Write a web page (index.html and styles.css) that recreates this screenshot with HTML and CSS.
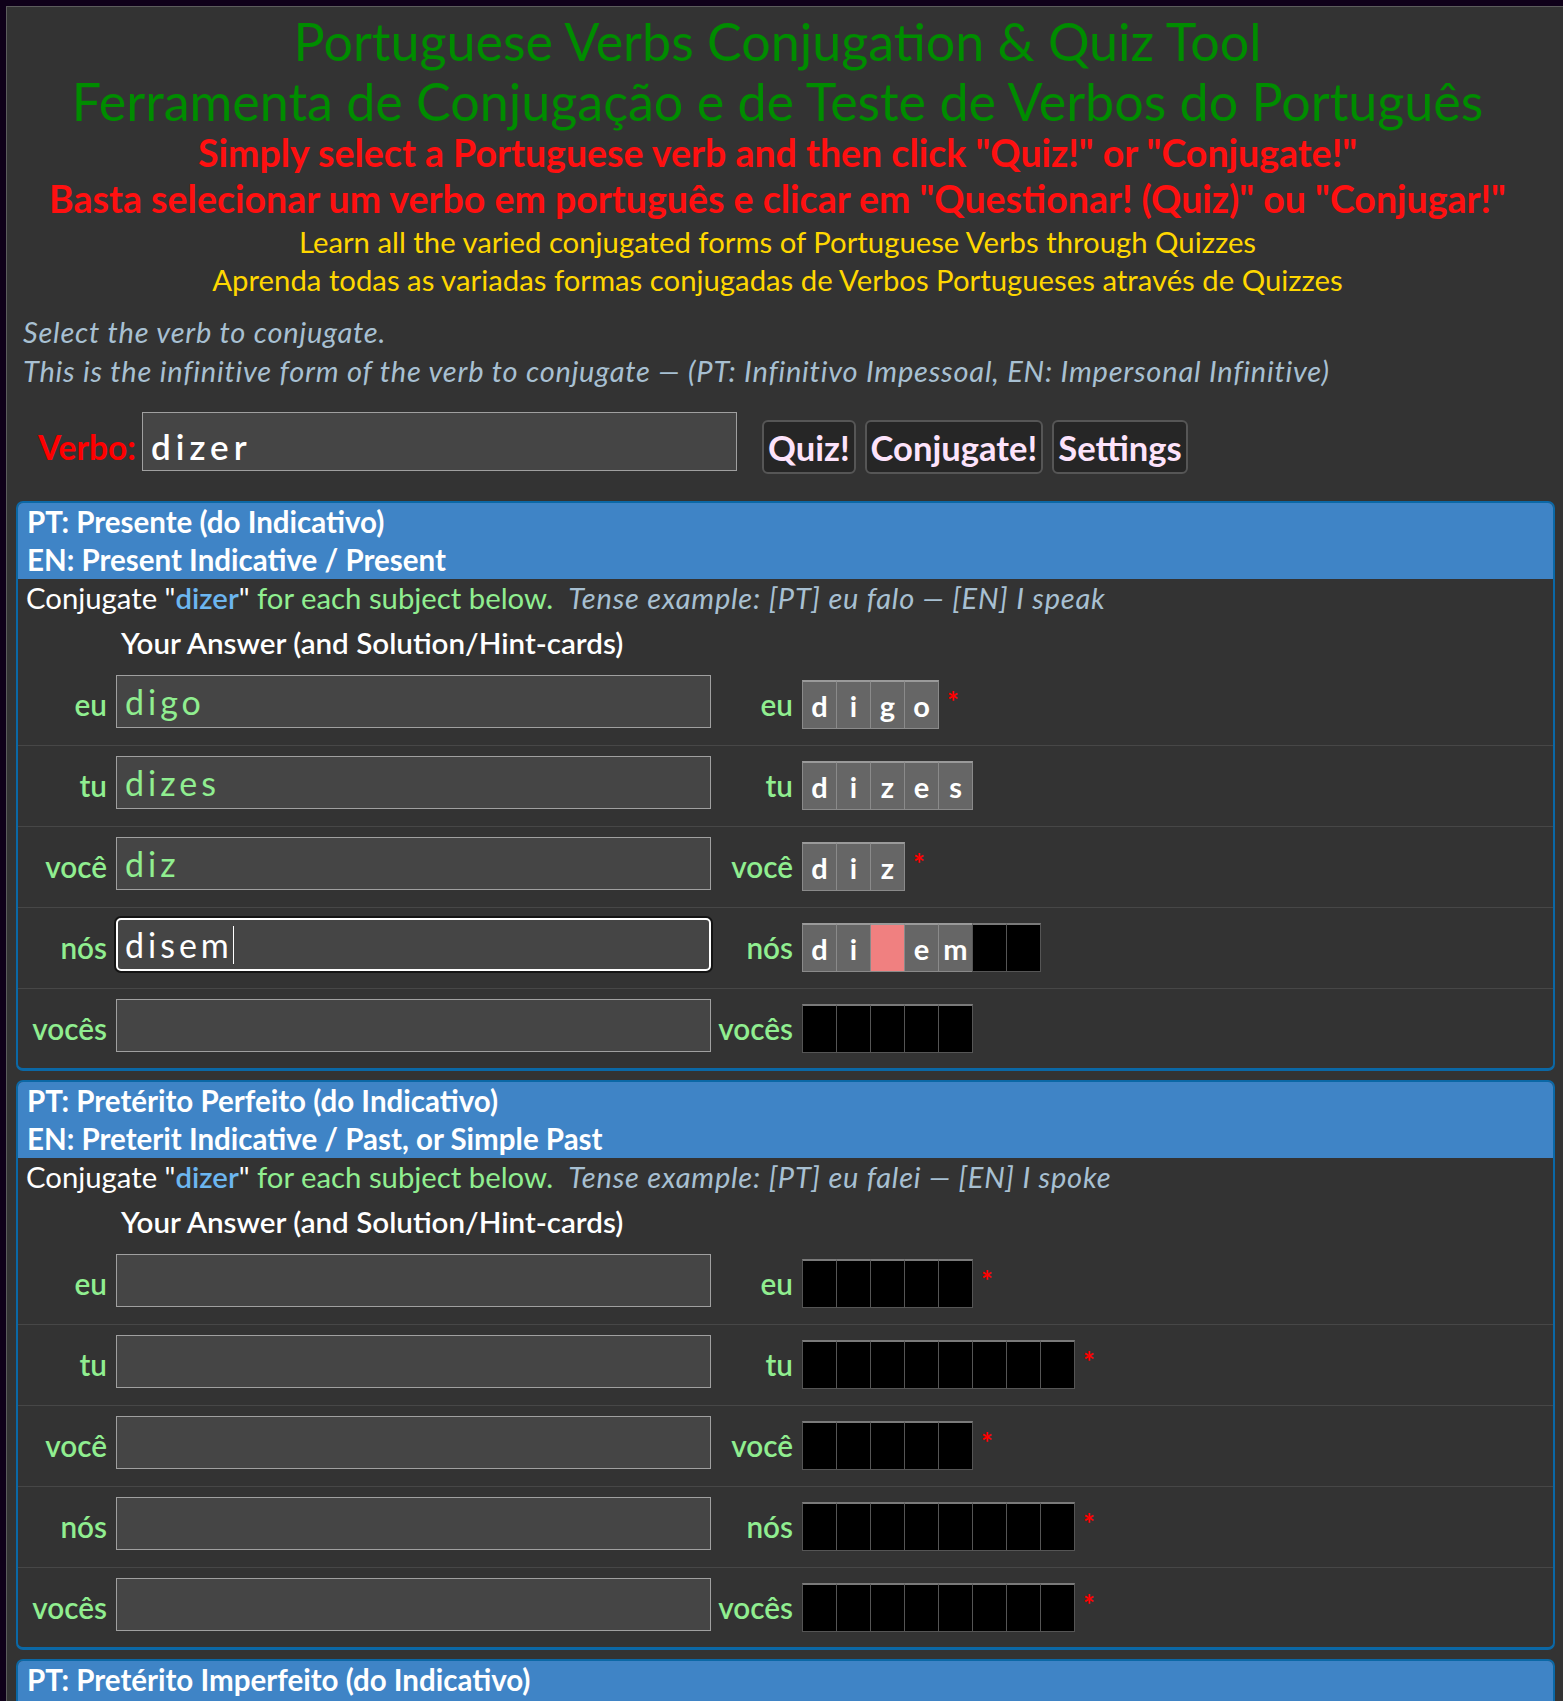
FILE: index.html
```html
<!DOCTYPE html>
<html lang="pt">
<head>
<meta charset="utf-8">
<title>Portuguese Verbs Conjugation &amp; Quiz Tool</title>
<link rel="stylesheet" href="styles.css">
</head>
<body>
<div class="app">
  <header class="intro">
    <h1 class="title">Portuguese Verbs Conjugation &amp; Quiz Tool<br>Ferramenta de Conjugação e de Teste de Verbos do Português</h1>
    <p class="cta">Simply select a Portuguese verb and then click "Quiz!" or "Conjugate!"<br>Basta selecionar um verbo em português e clicar em "Questionar! (Quiz)" ou "Conjugar!"</p>
    <p class="tagline">Learn all the varied conjugated forms of Portuguese Verbs through Quizzes<br>Aprenda todas as variadas formas conjugadas de Verbos Portugueses através de Quizzes</p>
  </header>

  <p class="hint">Select the verb to conjugate.<br>This is the infinitive form of the verb to conjugate — (PT: Infinitivo Impessoal, EN: Impersonal Infinitive)</p>

  <div class="verb-row">
    <span class="verb-label">Verbo:</span>
    <div class="verb-input">dizer</div>
    <div class="actions">
      <button class="btn">Quiz!</button>
      <button class="btn">Conjugate!</button>
      <button class="btn">Settings</button>
    </div>
  </div>

  <section class="tense">
    <div class="tense-head">PT: Presente (do Indicativo)<br>EN: Present Indicative / Present</div>
    <p class="instr">Conjugate "<b class="verb">dizer</b>" <span class="ok-text">for each subject below.</span>&nbsp; <i class="example">Tense example: [PT] eu falo — [EN] I speak</i></p>
    <div class="answers-head">Your Answer (and Solution/Hint-cards)</div>

    <div class="row">
      <span class="subj">eu</span>
      <div class="field ok">digo</div>
      <span class="subj">eu</span>
      <div class="cards">
        <div class="tiles"><span class="tile">d</span><span class="tile">i</span><span class="tile">g</span><span class="tile">o</span></div>
        <span class="star">*</span>
      </div>
    </div>
    <div class="row">
      <span class="subj">tu</span>
      <div class="field ok">dizes</div>
      <span class="subj">tu</span>
      <div class="cards">
        <div class="tiles"><span class="tile">d</span><span class="tile">i</span><span class="tile">z</span><span class="tile">e</span><span class="tile">s</span></div>
      </div>
    </div>
    <div class="row">
      <span class="subj">você</span>
      <div class="field ok">diz</div>
      <span class="subj">você</span>
      <div class="cards">
        <div class="tiles"><span class="tile">d</span><span class="tile">i</span><span class="tile">z</span></div>
        <span class="star">*</span>
      </div>
    </div>
    <div class="row">
      <span class="subj">nós</span>
      <div class="field focus">disem<span class="caret"></span></div>
      <span class="subj">nós</span>
      <div class="cards">
        <div class="tiles"><span class="tile">d</span><span class="tile">i</span><span class="tile wrong"></span><span class="tile">e</span><span class="tile">m</span><span class="tile blank"></span><span class="tile blank"></span></div>
      </div>
    </div>
    <div class="row">
      <span class="subj">vocês</span>
      <div class="field"></div>
      <span class="subj">vocês</span>
      <div class="cards">
        <div class="tiles"><span class="tile blank"></span><span class="tile blank"></span><span class="tile blank"></span><span class="tile blank"></span><span class="tile blank"></span></div>
      </div>
    </div>
  </section>

  <section class="tense">
    <div class="tense-head">PT: Pretérito Perfeito (do Indicativo)<br>EN: Preterit Indicative / Past, or Simple Past</div>
    <p class="instr">Conjugate "<b class="verb">dizer</b>" <span class="ok-text">for each subject below.</span>&nbsp; <i class="example">Tense example: [PT] eu falei — [EN] I spoke</i></p>
    <div class="answers-head">Your Answer (and Solution/Hint-cards)</div>

    <div class="row">
      <span class="subj">eu</span>
      <div class="field"></div>
      <span class="subj">eu</span>
      <div class="cards">
        <div class="tiles"><span class="tile blank"></span><span class="tile blank"></span><span class="tile blank"></span><span class="tile blank"></span><span class="tile blank"></span></div>
        <span class="star">*</span>
      </div>
    </div>
    <div class="row">
      <span class="subj">tu</span>
      <div class="field"></div>
      <span class="subj">tu</span>
      <div class="cards">
        <div class="tiles"><span class="tile blank"></span><span class="tile blank"></span><span class="tile blank"></span><span class="tile blank"></span><span class="tile blank"></span><span class="tile blank"></span><span class="tile blank"></span><span class="tile blank"></span></div>
        <span class="star">*</span>
      </div>
    </div>
    <div class="row">
      <span class="subj">você</span>
      <div class="field"></div>
      <span class="subj">você</span>
      <div class="cards">
        <div class="tiles"><span class="tile blank"></span><span class="tile blank"></span><span class="tile blank"></span><span class="tile blank"></span><span class="tile blank"></span></div>
        <span class="star">*</span>
      </div>
    </div>
    <div class="row">
      <span class="subj">nós</span>
      <div class="field"></div>
      <span class="subj">nós</span>
      <div class="cards">
        <div class="tiles"><span class="tile blank"></span><span class="tile blank"></span><span class="tile blank"></span><span class="tile blank"></span><span class="tile blank"></span><span class="tile blank"></span><span class="tile blank"></span><span class="tile blank"></span></div>
        <span class="star">*</span>
      </div>
    </div>
    <div class="row">
      <span class="subj">vocês</span>
      <div class="field"></div>
      <span class="subj">vocês</span>
      <div class="cards">
        <div class="tiles"><span class="tile blank"></span><span class="tile blank"></span><span class="tile blank"></span><span class="tile blank"></span><span class="tile blank"></span><span class="tile blank"></span><span class="tile blank"></span><span class="tile blank"></span></div>
        <span class="star">*</span>
      </div>
    </div>
  </section>

  <section class="tense">
    <div class="tense-head">PT: Pretérito Imperfeito (do Indicativo)<br>EN: Imperfect Indicative / Past Continuous</div>
    <p class="instr">Conjugate "<b class="verb">dizer</b>" <span class="ok-text">for each subject below.</span>&nbsp; <i class="example">Tense example: [PT] eu falava — [EN] I used to speak</i></p>
    <div class="answers-head">Your Answer (and Solution/Hint-cards)</div>
    <div class="row">
      <span class="subj">eu</span>
      <div class="field"></div>
      <span class="subj">eu</span>
      <div class="cards">
        <div class="tiles"><span class="tile blank"></span><span class="tile blank"></span><span class="tile blank"></span><span class="tile blank"></span><span class="tile blank"></span></div>
      </div>
    </div>
  </section>
</div>
</body>
</html>
```

FILE: styles.css
```css
* {
  box-sizing: border-box;
}

html {
  background: #0f0019;
}

body {
  margin: 6px 0 0 6px;
  background: #0f0019;
  color: #ffffff;
  font-family: "Lato", "Noto Sans", sans-serif;
}

.app {
  background: #333333;
  border: 1px solid #5c5c5c;
  border-right: 0;
  padding: 0 8px 10px 9px;
}

/* ---------- intro ---------- */
.intro {
  margin-right: 16px;
  padding-top: 4px;
  text-align: center;
}

.title {
  margin: 0;
  font-size: 52px;
  font-weight: 400;
  line-height: 60px;
  color: #008c00;
}

.cta {
  margin: -1px 0 0;
  font-size: 37.5px;
  font-weight: 700;
  line-height: 46px;
  color: #ff1010;
}

.tagline {
  margin: 1px 0 0;
  font-size: 29.3px;
  line-height: 38px;
  color: #ffd700;
}

.hint {
  margin: 13px 0 0;
  padding-left: 7px;
  font-size: 29px;
  font-style: italic;
  letter-spacing: 0.8px;
  line-height: 39px;
  color: #a8c0d2;
}

/* ---------- verb selector ---------- */
.verb-row {
  display: flex;
  align-items: center;
  height: 70px;
  margin-top: 22px;
  padding-left: 22px;
}

.verb-label {
  width: 104px;
  font-size: 33.5px;
  font-weight: 700;
  color: #ff0000;
}

.verb-input {
  display: flex;
  align-items: center;
  width: 595px;
  height: 59px;
  margin-bottom: 11px;
  padding: 8px 0 0 8px;
  background: #454545;
  border: 1px solid #a0a0a0;
  font-size: 35px;
  font-weight: 600;
  letter-spacing: 5px;
  color: #ffffff;
}

.actions {
  display: flex;
  gap: 9px;
  margin-left: 25px;
}

.btn {
  height: 54px;
  padding: 0 4px;
  background: #262626;
  border: 2px solid #565656;
  border-radius: 6px;
  color: #fde3fb;
  font-family: "Lato", "Noto Sans", sans-serif;
  font-size: 34.6px;
  font-weight: 700;
}

/* ---------- tense cards ---------- */
.tense {
  margin-top: 19px;
  border: 2px solid #0b68a6;
  border-bottom-width: 3px;
  border-radius: 7px;
  overflow: hidden;
}

.tense + .tense {
  margin-top: 9px;
}

.tense-head {
  padding-left: 9px;
  background: #3f84c6;
  font-size: 29.5px;
  font-weight: 700;
  line-height: 38px;
}

.instr {
  margin: 0;
  padding-left: 8px;
  font-size: 29.3px;
  line-height: 38px;
}

.verb {
  font-weight: 600;
  color: #6cb6f0;
}

.ok-text {
  color: #90ee90;
}

.example {
  font-size: 29px;
  letter-spacing: 0.8px;
  color: #a8c0d2;
}

.answers-head {
  margin: 7px 0 3px;
  padding-left: 103px;
  font-size: 29.6px;
  font-weight: 600;
  line-height: 38px;
}

.row {
  display: grid;
  grid-template-columns: 98px 595px 91px 1fr;
  align-items: center;
  padding: 10px 0 17px;
  border-bottom: 1px solid #474747;
}

.row:last-child {
  padding-bottom: 16px;
  border-bottom: 0;
}

.subj {
  padding: 5px 9px 0 0;
  text-align: right;
  font-size: 29.7px;
  font-weight: 600;
  color: #90ee90;
}

.field {
  display: flex;
  align-items: center;
  height: 53px;
  padding-left: 8px;
  background: #454545;
  border: 1px solid #a0a0a0;
  font-size: 34px;
  letter-spacing: 4px;
  color: #90ee90;
}

.field.focus {
  padding-left: 7px;
  border: 2px solid #ffffff;
  border-radius: 5px;
  box-shadow: 0 0 0 2px #141414;
  color: #ffffff;
}

.caret {
  display: inline-block;
  width: 1px;
  height: 38px;
  background: #ffffff;
}

.cards {
  display: flex;
  align-items: flex-start;
  margin: 5px 0 -1px;
}

.tiles {
  display: flex;
}

.tile {
  display: flex;
  align-items: center;
  justify-content: center;
  width: 35px;
  height: 49px;
  margin-right: -1px;
  background: #666666;
  border: 1px solid #8a8a8a;
  border-top: 2px solid #9a9a9a;
  font-size: 29px;
  font-weight: 700;
  color: #ffffff;
}

.tile.wrong {
  background: #f08080;
}

.tile.blank {
  background: #000000;
  border-color: #555555;
  border-top-color: #7a7a7a;
}

.star {
  margin: 7px 0 0 9px;
  font-size: 28px;
  font-weight: 700;
  line-height: 1;
  color: #ff0000;
}
```
